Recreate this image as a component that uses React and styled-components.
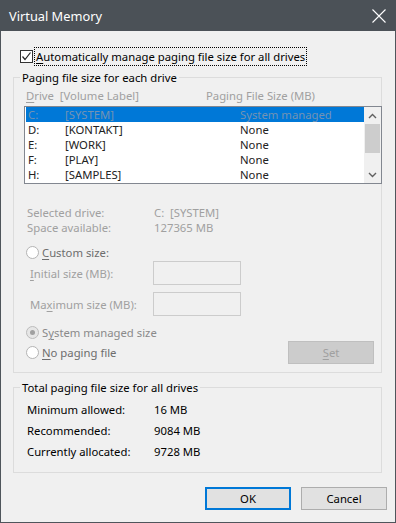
import React from 'react';
import styled, { createGlobalStyle } from 'styled-components';

const GlobalStyle = createGlobalStyle`
  html, body {
    margin: 0;
    padding: 0;
    background: #f0f0f0;
  }
  body {
    font-family: "Noto Sans", "DejaVu Sans", sans-serif;
    font-size: 11.3px;
    color: #000;
  }
`

const Window = styled.div`
  width: 396px;
  height: 523px;
  box-sizing: border-box;
  border: 1px solid #4f555b;
  border-top: none;
  background: #f0f0f0;
  display: flex;
  flex-direction: column;
`

const TitleBar = styled.div`
  height: 31px;
  margin: 0 -1px;
  background: #4b5157;
  color: #fff;
  display: flex;
  align-items: center;
  justify-content: space-between;
  padding: 0 9px 0 9px;
  font-size: 12.8px;
`

const CloseButton = styled.div`
  width: 14px;
  height: 14px;
  display: flex;
  margin-right: 1px;
`

const CheckRow = styled.label`
  display: flex;
  align-items: center;
  height: 18px;
  margin: 16px 0 0 19px;
  gap: 2px;
`

const CheckBox = styled.span`
  width: 13px;
  height: 13px;
  box-sizing: border-box;
  border: 1px solid #333;
  background: #fff;
  display: flex;
  align-items: center;
  justify-content: center;
`

const FocusLabel = styled.span`
  outline: 1px dotted #000;
  padding: 1px 1px;
  line-height: 15px;
`

const Key = styled.span`
  text-decoration: underline;
  text-underline-offset: 2px;
`

const Group = styled.fieldset`
  margin: ${p => p.$top}px 13px 0 12px;
  padding: 0 0 ${p => p.$bottom}px 0;
  min-width: 0;
  border: 1px solid #dcdcdc;
`

const Legend = styled.legend`
  margin-left: 6px;
  padding: 0 2px;
  line-height: 15px;
  color: #000;
`

const HeaderRow = styled.div`
  display: grid;
  grid-template-columns: 180px 1fr;
  height: 15px;
  line-height: 15px;
  margin: 3px 0 0 12px;
  color: #a0a0a0;
`

const ListBox = styled.div`
  margin: 3px -1px 0 10px;
  height: 78px;
  box-sizing: border-box;
  border: 1px solid #828790;
  background: #fff;
  display: flex;
`

const Rows = styled.div`
  flex: 1;
  padding-left: 1px;
`

const ListRow = styled.div`
  display: grid;
  grid-template-columns: 37px 175px 1fr;
  height: 15px;
  line-height: 15px;
  padding-left: 2px;
  background: ${p => (p.$selected ? '#0078d7' : 'transparent')};
  color: ${p => (p.$selected ? '#7393b3' : '#222')};
`

const ScrollBar = styled.div`
  width: 17px;
  background: #f0f0f0;
  display: flex;
  flex-direction: column;
`

const ScrollArrow = styled.div`
  height: 17px;
  display: flex;
  align-items: center;
  justify-content: center;
`

const Thumb = styled.div`
  height: 29px;
  margin: 0 1px;
  background: #cdcdcd;
`

const Track = styled.div`
  flex: 1;
`

const InfoBlock = styled.div`
  margin: 21px 0 0 13px;
  color: #a0a0a0;
`

const InfoRow = styled.div`
  display: grid;
  grid-template-columns: 127px 1fr;
  height: ${p => p.$h || 15}px;
  line-height: ${p => p.$h || 15}px;
`

const RadioRow = styled.div`
  display: flex;
  align-items: center;
  height: 15px;
  margin: ${p => p.$top}px 0 0 ${p => (p.$inline ? 0 : 12)}px;
  gap: 3px;
  color: ${p => p.$color};
`

const Radio = styled.span`
  width: 13px;
  height: 13px;
  box-sizing: border-box;
  border-radius: 50%;
  border: 1px solid ${p => (p.$checked ? '#bcbcbc' : '#b4b4b4')};
  background: ${p => (p.$checked ? '#e6e6e6' : '#fff')};
  display: flex;
  align-items: center;
  justify-content: center;

  &::after {
    content: '';
    width: 5px;
    height: 5px;
    border-radius: 50%;
    background: #a0a0a0;
    display: ${p => (p.$checked ? 'block' : 'none')};
  }
`

const FieldRow = styled.div`
  display: flex;
  align-items: center;
  height: 24px;
  margin: ${p => p.$top}px 0 0 16px;
  color: #a0a0a0;
`

const FieldLabel = styled.span`
  width: 123px;
`

const TextBox = styled.div`
  width: 88px;
  height: 24px;
  box-sizing: border-box;
  border: 1px solid #cccccc;
  background: #f0f0f0;
`

const SetRow = styled.div`
  display: flex;
  align-items: center;
  justify-content: space-between;
  height: 23px;
  margin: 1px 7px 0 12px;
`

const Button = styled.div`
  width: 86px;
  height: 23px;
  box-sizing: border-box;
  display: flex;
  align-items: center;
  justify-content: center;
  border-style: solid;
  border-width: ${p => (p.$default ? 2 : 1)}px;
  border-color: ${p => (p.$disabled ? '#bfbfbf' : p.$default ? '#0078d7' : '#adadad')};
  background: ${p => (p.$disabled ? '#cccccc' : '#e1e1e1')};
  color: ${p => (p.$disabled ? '#a0a0a0' : '#000')};
`

const TotalsBlock = styled.div`
  margin: 4px 0 0 13px;
`

const Footer = styled.div`
  display: flex;
  justify-content: flex-end;
  gap: 10px;
  margin: 14px 8px 0 0;
`

const drives = [
  { letter: 'C:', label: '[SYSTEM]', size: 'System managed', selected: true },
  { letter: 'D:', label: '[KONTAKT]', size: 'None' },
  { letter: 'E:', label: '[WORK]', size: 'None' },
  { letter: 'F:', label: '[PLAY]', size: 'None' },
  { letter: 'H:', label: '[SAMPLES]', size: 'None' },
];

const Chevron = ({ up }) => (
  <svg width="9" height="6" viewBox="0 0 9 6">
    <polyline
      points={up ? '1,5 4.5,1.5 8,5' : '1,1 4.5,4.5 8,1'}
      fill="none"
      stroke="#606060"
      strokeWidth="1.4"
    />
  </svg>
);

export default function App() {
  return (
    <>
      <GlobalStyle />
      <Window>
        <TitleBar>
          <span>Virtual Memory</span>
          <CloseButton>
            <svg width="14" height="14" viewBox="0 0 14 14">
              <path d="M0.5 0.5 L13.5 13.5 M13.5 0.5 L0.5 13.5" stroke="#fff" strokeWidth="1.1" />
            </svg>
          </CloseButton>
        </TitleBar>

        <CheckRow>
          <CheckBox>
            <svg width="11" height="11" viewBox="0 0 11 11">
              <polyline points="1.5,5.5 4,8.5 9.5,1.5" fill="none" stroke="#222" strokeWidth="1.2" />
            </svg>
          </CheckBox>
          <FocusLabel>
            <Key>A</Key>utomatically manage paging file size for all drives
          </FocusLabel>
        </CheckRow>

        <Group $top={5} $bottom={8}>
          <Legend>Paging file size for each drive</Legend>
          <HeaderRow>
            <span><Key>D</Key>rive&nbsp; [Volume Label]</span>
            <span>Paging File Size (MB)</span>
          </HeaderRow>
          <ListBox>
            <Rows>
              {drives.map(d => (
                <ListRow key={d.letter} $selected={d.selected}>
                  <span>{d.letter}</span>
                  <span>{d.label}</span>
                  <span>{d.size}</span>
                </ListRow>
              ))}
            </Rows>
            <ScrollBar>
              <ScrollArrow><Chevron up /></ScrollArrow>
              <Thumb />
              <Track />
              <ScrollArrow><Chevron /></ScrollArrow>
            </ScrollBar>
          </ListBox>

          <InfoBlock>
            <InfoRow>
              <span>Selected drive:</span>
              <span>C:&nbsp; [SYSTEM]</span>
            </InfoRow>
            <InfoRow>
              <span>Space available:</span>
              <span>127365 MB</span>
            </InfoRow>
          </InfoBlock>

          <RadioRow $top={10} $color="#6d6d6d">
            <Radio />
            <span><Key>C</Key>ustom size:</span>
          </RadioRow>
          <FieldRow $top={1}>
            <FieldLabel><Key>I</Key>nitial size (MB):</FieldLabel>
            <TextBox />
          </FieldRow>
          <FieldRow $top={7}>
            <FieldLabel>Ma<Key>x</Key>imum size (MB):</FieldLabel>
            <TextBox />
          </FieldRow>
          <RadioRow $top={9} $color="#8a8a8a">
            <Radio $checked />
            <span>S<Key>y</Key>stem managed size</span>
          </RadioRow>
          <SetRow>
            <RadioRow $top={0} $inline $color="#6d6d6d">
              <Radio />
              <span><Key>N</Key>o paging file</span>
            </RadioRow>
            <Button $disabled><span><Key>S</Key>et</span></Button>
          </SetRow>
        </Group>

        <Group $top={7} $bottom={10}>
          <Legend>Total paging file size for all drives</Legend>
          <TotalsBlock>
            <InfoRow $h={21}>
              <span>Minimum allowed:</span>
              <span>16 MB</span>
            </InfoRow>
            <InfoRow $h={21}>
              <span>Recommended:</span>
              <span>9084 MB</span>
            </InfoRow>
            <InfoRow $h={21}>
              <span>Currently allocated:</span>
              <span>9728 MB</span>
            </InfoRow>
          </TotalsBlock>
        </Group>

        <Footer>
          <Button $default>OK</Button>
          <Button>Cancel</Button>
        </Footer>
      </Window>
    </>
  );
}
